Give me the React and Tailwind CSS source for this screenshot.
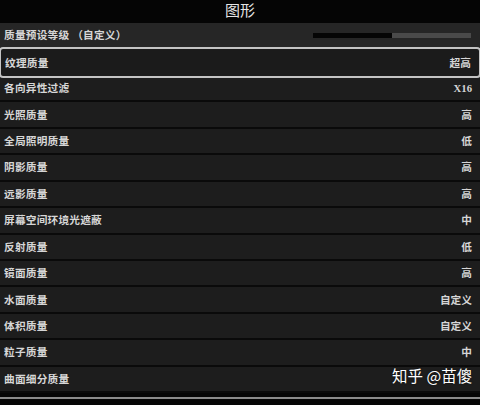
const rows = [
  { label: '纹理质量', value: '超高', active: true },
  { label: '各向异性过滤', value: 'X16' },
  { label: '光照质量', value: '高' },
  { label: '全局照明质量', value: '低' },
  { label: '阴影质量', value: '高' },
  { label: '远影质量', value: '高' },
  { label: '屏幕空间环境光遮蔽', value: '中' },
  { label: '反射质量', value: '低' },
  { label: '镜面质量', value: '高' },
  { label: '水面质量', value: '自定义' },
  { label: '体积质量', value: '自定义' },
  { label: '粒子质量', value: '中' },
  { label: '曲面细分质量', value: '' },
];

const serif = { fontFamily: '"Liberation Serif", "Noto Sans CJK SC", serif' };

export default function App() {
  return (
    <div className="relative w-[480px] h-[405px] overflow-hidden bg-[#050505] text-[#d6d6d6]" style={serif}>
      {/* title */}
      <div className="h-[23px] flex items-center justify-center text-[15px] text-[#e4e4e4]">图形</div>

      <div className="flex flex-col">
        {/* preset row */}
        <div className="h-[26.45px] bg-[#262626] border-b-2 border-[#0a0a0a] flex items-center pl-[4px] pr-[9px]">
          <span className="text-[10.7px] font-bold tracking-[0.2px]">质量预设等级 （自定义）</span>
          <div className="ml-auto flex h-[5px] w-[158px]">
            <div className="w-[79px] bg-[#050505]"></div>
            <div className="flex-1 bg-[#4a4a4a]"></div>
          </div>
        </div>

        {rows.map((r) => (
          <div
            key={r.label}
            className={
              r.active
                ? 'relative h-[26.45px] bg-[#1b1b1b] flex items-center pl-[4px] pr-[8px] rounded-[2px] ring-2 ring-[#c4c4c4] mx-[1px] z-10'
                : 'h-[26.45px] bg-[#1d1d1d] border-b-2 border-[#0a0a0a] flex items-center pl-[4px] pr-[8px]'
            }
          >
            <span className="text-[10.7px] font-bold tracking-[0.2px]">{r.label}</span>
            <span className="ml-auto text-[10.7px] font-bold">{r.value}</span>
          </div>
        ))}
      </div>

      <div className="mt-[4px] h-[2px] bg-[#8a8a8a]"></div>

      {/* watermark */}
      <div
        className="absolute left-[392px] top-[368px] text-[15.5px] text-white leading-none"
        style={{ fontFamily: '"Noto Sans CJK SC", sans-serif', textShadow: '0 0 2px rgba(0,0,0,0.6)' }}
      >
        知乎 @苗傻
      </div>
    </div>
  );
}
